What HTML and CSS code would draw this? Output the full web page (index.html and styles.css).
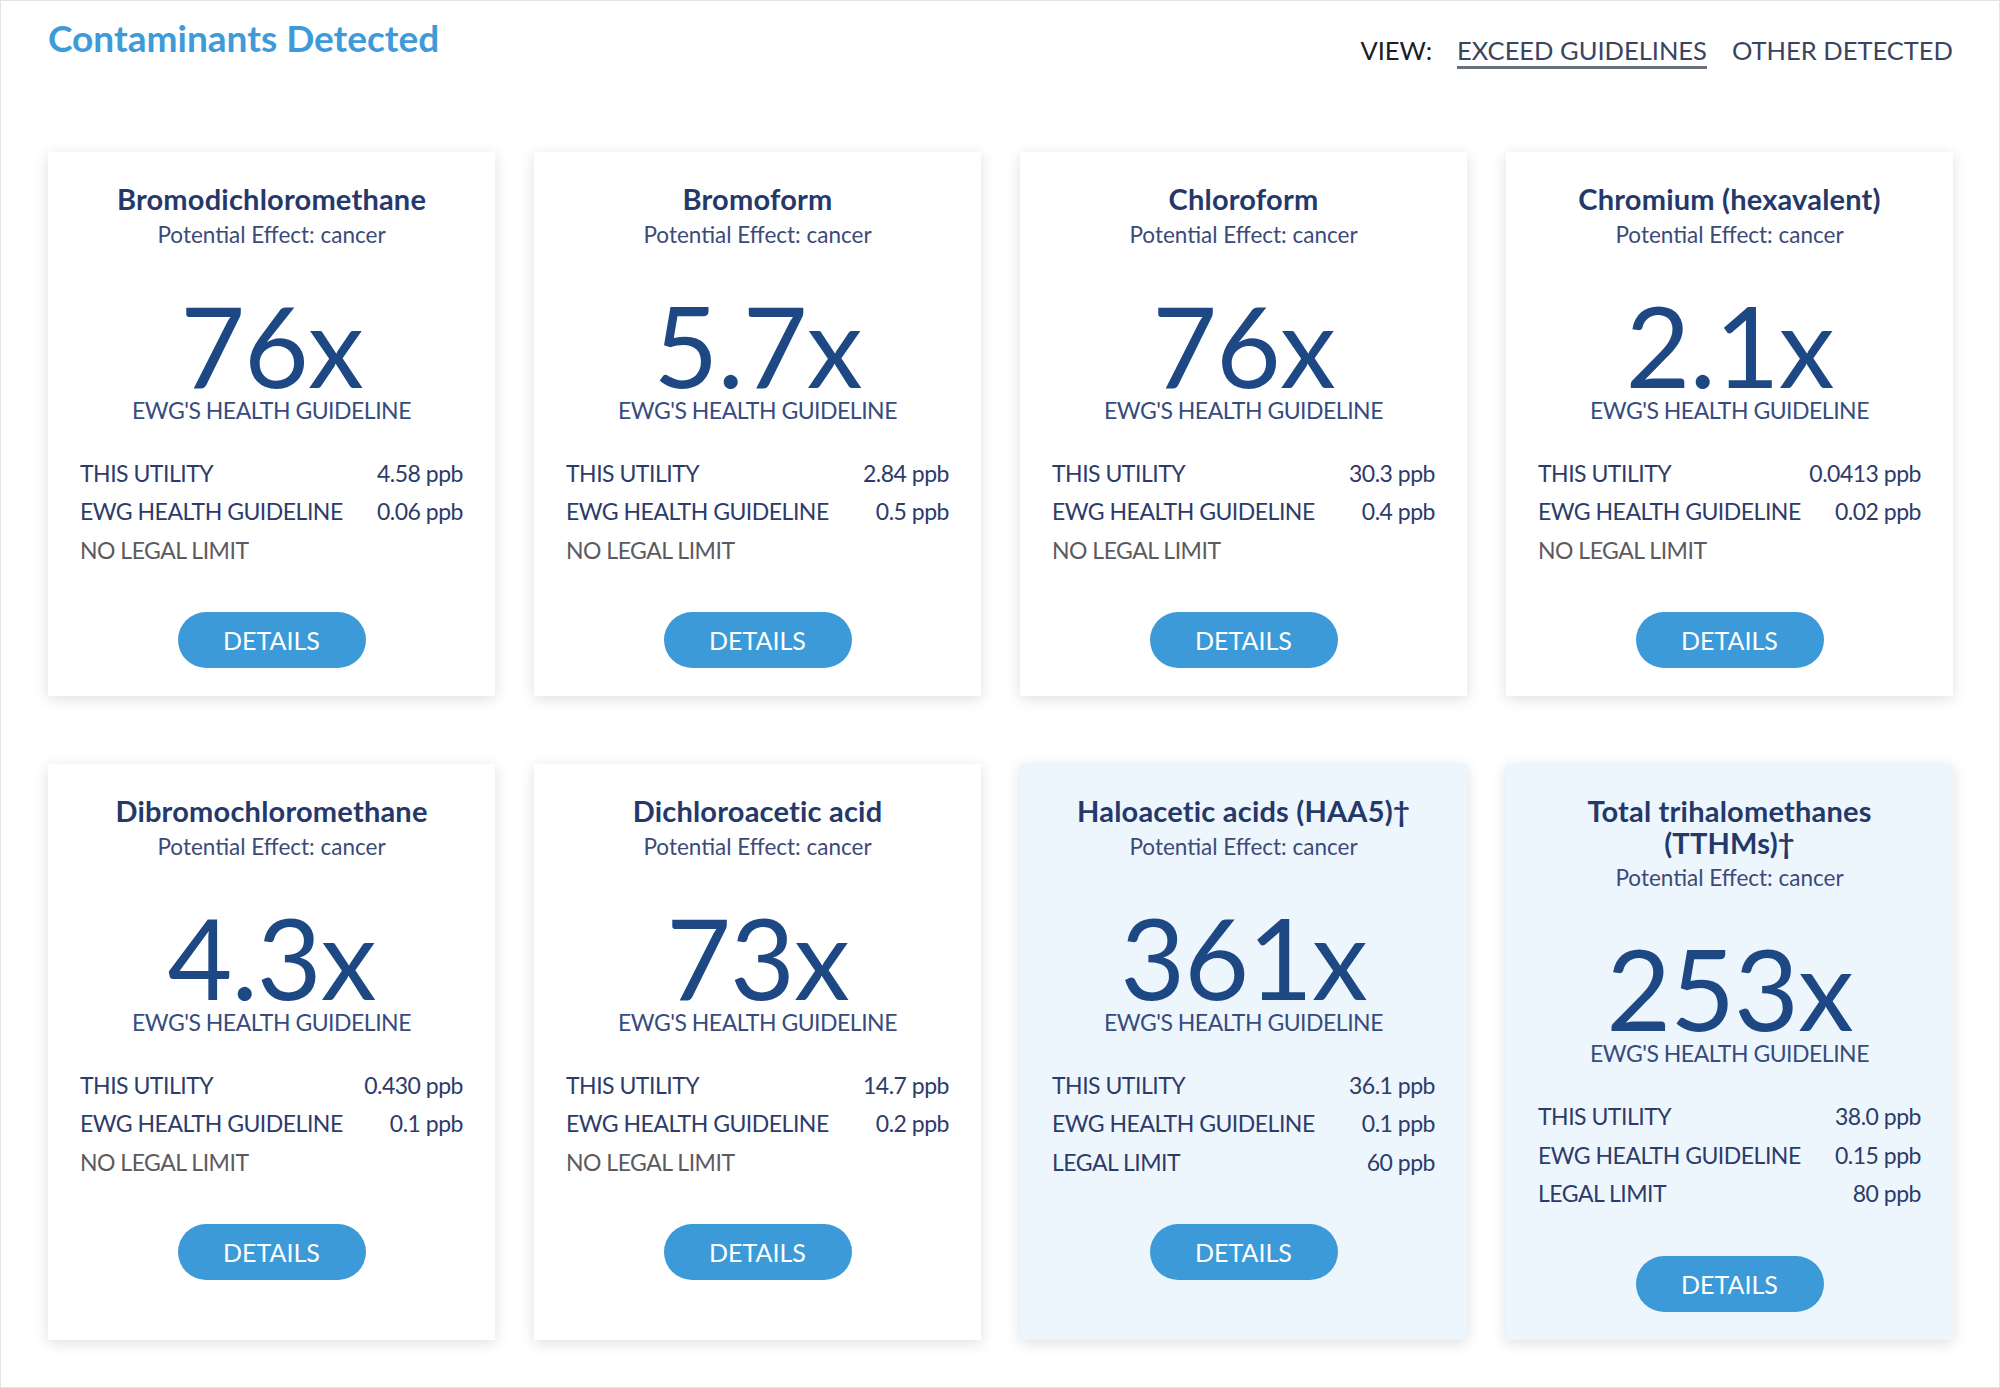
FILE: index.html
```html
<!DOCTYPE html>
<html lang="en">
<head>
<meta charset="utf-8">
<title>Contaminants Detected</title>
<link rel="stylesheet" href="styles.css">
</head>
<body>
<div class="frame">
  <header class="head">
    <h1 class="page-title">Contaminants Detected</h1>
    <nav class="view-nav">
      <span class="view-label">VIEW:</span>
      <a class="view-link active">EXCEED GUIDELINES</a>
      <a class="view-link">OTHER DETECTED</a>
    </nav>
  </header>

  <section class="grid">
    <article class="card">
      <h2 class="c-title">Bromodichloromethane</h2>
      <p class="c-effect">Potential Effect: cancer</p>
      <div class="c-times">76x</div>
      <div class="c-guide">EWG'S HEALTH GUIDELINE</div>
      <div class="c-rows">
        <div class="c-row"><span>THIS UTILITY</span><span>4.58 ppb</span></div>
        <div class="c-row"><span>EWG HEALTH GUIDELINE</span><span>0.06 ppb</span></div>
        <div class="c-row muted"><span>NO LEGAL LIMIT</span></div>
      </div>
      <a class="btn">DETAILS</a>
    </article>

    <article class="card">
      <h2 class="c-title">Bromoform</h2>
      <p class="c-effect">Potential Effect: cancer</p>
      <div class="c-times">5.7x</div>
      <div class="c-guide">EWG'S HEALTH GUIDELINE</div>
      <div class="c-rows">
        <div class="c-row"><span>THIS UTILITY</span><span>2.84 ppb</span></div>
        <div class="c-row"><span>EWG HEALTH GUIDELINE</span><span>0.5 ppb</span></div>
        <div class="c-row muted"><span>NO LEGAL LIMIT</span></div>
      </div>
      <a class="btn">DETAILS</a>
    </article>

    <article class="card">
      <h2 class="c-title">Chloroform</h2>
      <p class="c-effect">Potential Effect: cancer</p>
      <div class="c-times">76x</div>
      <div class="c-guide">EWG'S HEALTH GUIDELINE</div>
      <div class="c-rows">
        <div class="c-row"><span>THIS UTILITY</span><span>30.3 ppb</span></div>
        <div class="c-row"><span>EWG HEALTH GUIDELINE</span><span>0.4 ppb</span></div>
        <div class="c-row muted"><span>NO LEGAL LIMIT</span></div>
      </div>
      <a class="btn">DETAILS</a>
    </article>

    <article class="card">
      <h2 class="c-title">Chromium (hexavalent)</h2>
      <p class="c-effect">Potential Effect: cancer</p>
      <div class="c-times">2.1x</div>
      <div class="c-guide">EWG'S HEALTH GUIDELINE</div>
      <div class="c-rows">
        <div class="c-row"><span>THIS UTILITY</span><span>0.0413 ppb</span></div>
        <div class="c-row"><span>EWG HEALTH GUIDELINE</span><span>0.02 ppb</span></div>
        <div class="c-row muted"><span>NO LEGAL LIMIT</span></div>
      </div>
      <a class="btn">DETAILS</a>
    </article>

    <article class="card">
      <h2 class="c-title">Dibromochloromethane</h2>
      <p class="c-effect">Potential Effect: cancer</p>
      <div class="c-times">4.3x</div>
      <div class="c-guide">EWG'S HEALTH GUIDELINE</div>
      <div class="c-rows">
        <div class="c-row"><span>THIS UTILITY</span><span>0.430 ppb</span></div>
        <div class="c-row"><span>EWG HEALTH GUIDELINE</span><span>0.1 ppb</span></div>
        <div class="c-row muted"><span>NO LEGAL LIMIT</span></div>
      </div>
      <a class="btn">DETAILS</a>
    </article>

    <article class="card">
      <h2 class="c-title">Dichloroacetic acid</h2>
      <p class="c-effect">Potential Effect: cancer</p>
      <div class="c-times">73x</div>
      <div class="c-guide">EWG'S HEALTH GUIDELINE</div>
      <div class="c-rows">
        <div class="c-row"><span>THIS UTILITY</span><span>14.7 ppb</span></div>
        <div class="c-row"><span>EWG HEALTH GUIDELINE</span><span>0.2 ppb</span></div>
        <div class="c-row muted"><span>NO LEGAL LIMIT</span></div>
      </div>
      <a class="btn">DETAILS</a>
    </article>

    <article class="card card-blue">
      <h2 class="c-title">Haloacetic acids (HAA5)†</h2>
      <p class="c-effect">Potential Effect: cancer</p>
      <div class="c-times">361x</div>
      <div class="c-guide">EWG'S HEALTH GUIDELINE</div>
      <div class="c-rows">
        <div class="c-row"><span>THIS UTILITY</span><span>36.1 ppb</span></div>
        <div class="c-row"><span>EWG HEALTH GUIDELINE</span><span>0.1 ppb</span></div>
        <div class="c-row"><span>LEGAL LIMIT</span><span>60 ppb</span></div>
      </div>
      <a class="btn">DETAILS</a>
    </article>

    <article class="card card-blue">
      <h2 class="c-title">Total trihalomethanes<br>(TTHMs)†</h2>
      <p class="c-effect">Potential Effect: cancer</p>
      <div class="c-times">253x</div>
      <div class="c-guide">EWG'S HEALTH GUIDELINE</div>
      <div class="c-rows">
        <div class="c-row"><span>THIS UTILITY</span><span>38.0 ppb</span></div>
        <div class="c-row"><span>EWG HEALTH GUIDELINE</span><span>0.15 ppb</span></div>
        <div class="c-row"><span>LEGAL LIMIT</span><span>80 ppb</span></div>
      </div>
      <a class="btn">DETAILS</a>
    </article>
  </section>
</div>
</body>
</html>
```

FILE: styles.css
```css
* { box-sizing: border-box; }

html, body {
  margin: 0;
  padding: 0;
  background: #ffffff;
}

body {
  font-family: Lato, "Open Sans", "Liberation Sans", sans-serif;
}

.frame {
  width: 2000px;
  height: 1388px;
  border: 1px solid #e4e4e4;
  background: #ffffff;
  overflow: hidden;
}

.head {
  display: flex;
  justify-content: space-between;
  align-items: flex-start;
  padding: 15px 46px 0 47px;
}

.page-title {
  margin: 0;
  font-size: 37px;
  line-height: 44px;
  font-weight: 700;
  color: #3f9ad9;
}

.view-nav {
  display: flex;
  align-items: flex-start;
  gap: 25px;
  margin-top: 19px;
  font-size: 25.5px;
  line-height: 31px;
}

.view-label {
  color: #1a1d26;
}

.view-link {
  color: #3a4461;
  padding-bottom: 0;
  border-bottom: 3px solid transparent;
}

.view-link.active {
  border-bottom-color: #6b7080;
}

.grid {
  display: grid;
  grid-template-columns: repeat(4, 1fr);
  column-gap: 39px;
  row-gap: 68px;
  padding: 0 46px 0 47px;
  margin-top: 83px;
}

.card {
  background: #ffffff;
  box-shadow: 0 3px 14px rgba(0, 0, 0, 0.13);
  padding: 31px 30px 28px;
  text-align: center;
}

.card-blue {
  background: #eef6fd;
}

.c-title {
  margin: 0;
  font-size: 29px;
  line-height: 31.5px;
  font-weight: 700;
  letter-spacing: 0.2px;
  color: #24396a;
}

.c-effect {
  margin: 6px 0 0;
  font-size: 22.5px;
  line-height: 28px;
  color: #3b4a78;
}

.c-times {
  margin-top: 44px;
  font-size: 112px;
  line-height: 104px;
  font-weight: 400;
  color: #1d4884;
  letter-spacing: -1px;
}

.c-guide {
  font-size: 23px;
  line-height: 26px;
  color: #364c7e;
  letter-spacing: -0.5px;
}

.c-rows {
  margin-top: 31px;
  padding: 0 2px;
  text-align: left;
}

.c-row {
  display: flex;
  justify-content: space-between;
  font-size: 23px;
  line-height: 38.5px;
  color: #2d3b6b;
  letter-spacing: -0.5px;
}

.c-row.muted {
  color: #5c5a5e;
}

.btn {
  display: inline-block;
  margin-top: 43px;
  width: 188px;
  height: 56px;
  border-radius: 28px;
  background: #3d9ad8;
  color: #ffffff;
  font-size: 25px;
  line-height: 56px;
  text-align: center;
}
```
